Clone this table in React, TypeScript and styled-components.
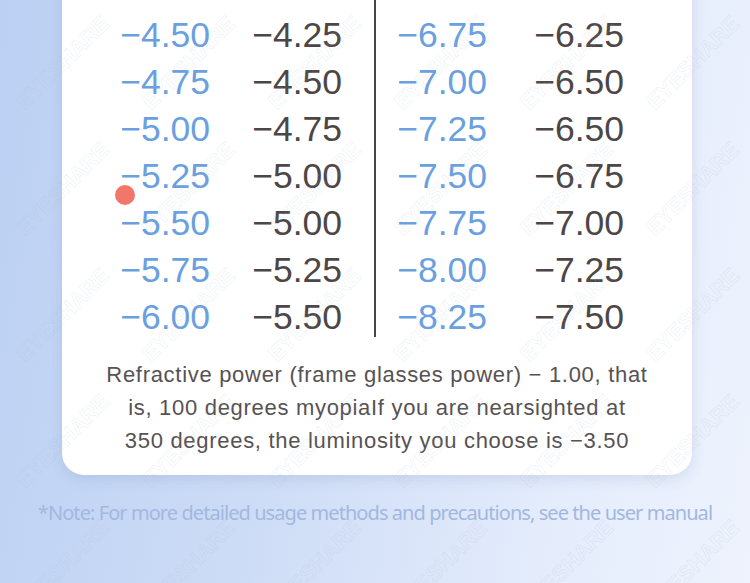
import React from 'react';
import styled, { createGlobalStyle } from 'styled-components';

const rows: [string, string, string, string][] = [
  ['−4.25', '−4.00', '−6.50', '−6.00'],
  ['−4.50', '−4.25', '−6.75', '−6.25'],
  ['−4.75', '−4.50', '−7.00', '−6.50'],
  ['−5.00', '−4.75', '−7.25', '−6.50'],
  ['−5.25', '−5.00', '−7.50', '−6.75'],
  ['−5.50', '−5.00', '−7.75', '−7.00'],
  ['−5.75', '−5.25', '−8.00', '−7.25'],
  ['−6.00', '−5.50', '−8.25', '−7.50'],
];

const GlobalStyle = createGlobalStyle`
  html, body {
    margin: 0;
    padding: 0;
    overflow: hidden;
  }
`;

const Watermark = () => (
  <WatermarkLayer width="750" height="583">
    <defs>
      <pattern id="wm" width="126" height="126" patternUnits="userSpaceOnUse">
        <text
          x="63"
          y="70"
          textAnchor="middle"
          transform="rotate(-45 63 63)"
          fontFamily="Liberation Sans, Arial, sans-serif"
          fontWeight="bold"
          fontSize="22"
          fill="none"
          stroke="rgba(170,180,200,0.16)"
          strokeWidth="0.8"
        >
          EYESHARE
        </text>
      </pattern>
    </defs>
    <rect width="750" height="583" fill="url(#wm)" />
  </WatermarkLayer>
);

const App: React.FC = () => {
  return (
    <Page>
      <GlobalStyle />
      <Card>
        <Table>
          <Half $cols="148px 132px">
            {rows.map((r, i) => (
              <React.Fragment key={i}>
                <Cell $blue>{r[0]}</Cell>
                <Cell>{r[1]}</Cell>
              </React.Fragment>
            ))}
          </Half>
          <Divider />
          <Half $cols="111px 137px">
            {rows.map((r, i) => (
              <React.Fragment key={i}>
                <Cell $blue>{r[2]}</Cell>
                <Cell>{r[3]}</Cell>
              </React.Fragment>
            ))}
          </Half>
        </Table>
        <Explain>
          Refractive power (frame glasses power) − 1.00, that
          <br />
          is, 100 degrees myopiaIf you are nearsighted at
          <br />
          350 degrees, the luminosity you choose is −3.50
        </Explain>
        <Dot />
      </Card>
      <Note>
        *Note: For more detailed usage methods and precautions, see the user
        manual
      </Note>
      <Watermark />
    </Page>
  );
};

const Page: any = styled.div`
  position: relative;
  width: 750px;
  height: 583px;
  overflow: hidden;
  background: linear-gradient(100deg, #bbd0f3 0%, #cddcf6 40%, #e4ecfc 75%, #eef3fd 100%);
  display: flex;
  flex-direction: column;
`;

const Card: any = styled.div`
  position: relative;
  margin: -50px 0 0 62px;
  width: 630px;
  padding: 15px 0 18px;
  background: #fff;
  border-radius: 0 0 22px 22px;
  box-shadow: 0 4px 14px rgba(90, 110, 160, 0.16);
  display: flex;
  flex-direction: column;
`;

const Table: any = styled.div`
  display: flex;
`;

const Half: any = styled.div`
  display: grid;
  grid-template-columns: ${(p: any) => p.$cols};
  grid-auto-rows: 47px;
  width: 312px;
  &:last-child {
    width: 316px;
  }
`;

const Cell: any = styled.div`
  display: flex;
  align-items: center;
  justify-content: flex-end;
  font-family: 'Liberation Sans', Arial, sans-serif;
  font-size: 35.5px;
  color: ${(p: any) => (p.$blue ? '#6a9fe0' : '#4d4647')};
`;

const Divider: any = styled.div`
  width: 2px;
  margin-bottom: 4px;
  background: #4a4546;
`;

const Explain: any = styled.p`
  margin: 17px 0 0;
  text-align: center;
  font-family: 'Liberation Sans', Arial, sans-serif;
  font-size: 22px;
  line-height: 33px;
  letter-spacing: 0.7px;
  color: #575253;
`;

const Dot: any = styled.span`
  position: absolute;
  left: 53px;
  top: 235px;
  width: 20px;
  height: 20px;
  border-radius: 50%;
  background: #f3766b;
`;

const Note: any = styled.p`
  margin: 23px 0 0;
  text-align: center;
  font-family: 'Noto Sans', sans-serif;
  font-size: 20px;
  line-height: 30px;
  letter-spacing: -0.93px;
  color: #a2b8df;
`;

const WatermarkLayer: any = styled.svg`
  position: absolute;
  left: 0;
  top: 0;
  pointer-events: none;
`;

export default App;
